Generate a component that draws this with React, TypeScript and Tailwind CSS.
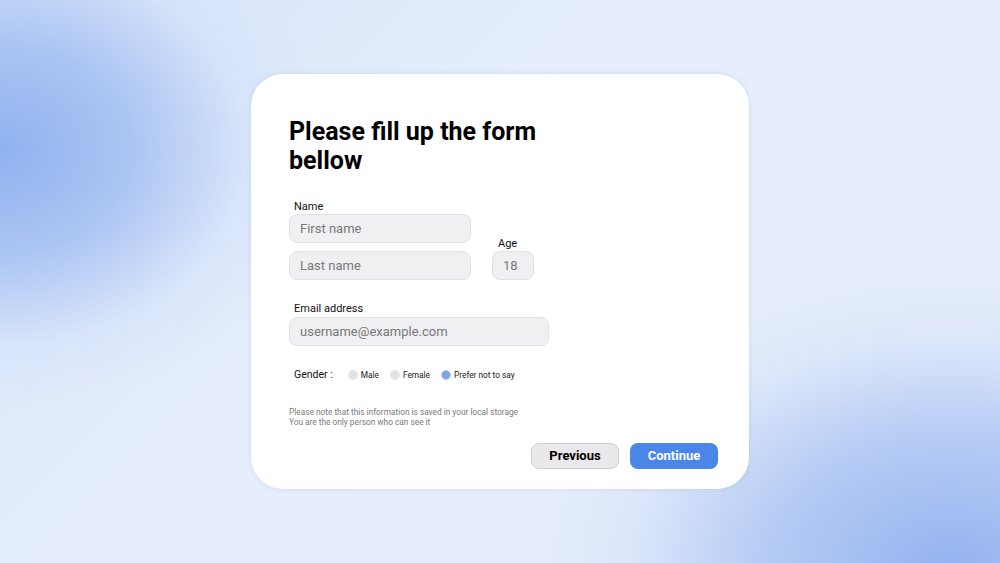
import { useState } from 'react';

const GENDERS = ['Male', 'Female', 'Prefer not to say'];

function Field({ placeholder, className }: { placeholder: string; className: string }) {
  return (
    <input
      placeholder={placeholder}
      className={`h-[29px] rounded-[8px] border border-[#e1e1e6] bg-[#f0f0f3] px-[10px] text-[13px] text-[#333] outline-none placeholder:text-[#787878] ${className}`}
    />
  );
}

export default function App() {
  const [gender, setGender] = useState('Prefer not to say');

  return (
    <div
      className="flex h-[563px] w-[1000px] items-center justify-center overflow-hidden bg-[#e7eefb] bg-[radial-gradient(ellipse_330px_260px_at_0px_150px,#8fb2ef_0%,rgba(150,182,240,0.7)_40%,rgba(200,218,248,0.35)_75%,transparent_100%),radial-gradient(ellipse_420px_300px_at_950px_570px,#93b2ef_0%,rgba(150,182,240,0.6)_45%,rgba(200,218,248,0.3)_78%,transparent_100%),linear-gradient(135deg,#d6e3f9_0%,#e6eefc_40%,#e6edfb_100%)]"
      style={{ fontFamily: 'Roboto, "Liberation Sans", sans-serif' }}
    >
      <div className="flex h-[415px] w-[498px] flex-col rounded-[32px] bg-white pl-[38px] pr-[31px] pt-[43px] shadow-[0_0_5px_rgba(60,80,120,0.12)]">
        <h1 className="text-[25px] font-bold leading-[29px] text-black">
          Please fill up the form
          <br />
          bellow
        </h1>

        <div className="mt-[25px] flex items-end gap-[21px]">
          <div className="flex w-[182px] flex-col">
            <label className="pl-[5px] text-[11px] leading-[13px] text-[#111]">Name</label>
            <Field placeholder="First name" className="mt-[1px] w-[182px]" />
            <Field placeholder="Last name" className="mt-[8px] w-[182px]" />
          </div>
          <div className="flex flex-col">
            <label className="pl-[6px] text-[11px] leading-[13px] text-[#111]">Age</label>
            <Field placeholder="18" className="mt-[1px] w-[42px]" />
          </div>
        </div>

        <div className="mt-[22px] flex flex-col">
          <label className="pl-[5px] text-[11px] leading-[13px] text-[#111]">Email address</label>
          <Field placeholder="username@example.com" className="mt-[2px] w-[260px]" />
        </div>

        <div className="mt-[22px] flex h-[14px] items-center pl-[5px]">
          <span className="mr-[15px] text-[10.5px] text-[#111]">Gender :</span>
          <div className="flex items-center gap-[11px]">
            {GENDERS.map((g) => (
              <label key={g} className="flex cursor-pointer items-center gap-[3px]" onClick={() => setGender(g)}>
                <span
                  className={
                    gender === g
                      ? 'h-[10px] w-[10px] rounded-full border-[1.5px] border-[#b8cdf3] bg-[#7ca4ea]'
                      : 'h-[10px] w-[10px] rounded-full border border-[#e6e6e9] bg-[#e2e2e5]'
                  }
                />
                <span className="text-[8.3px] text-[#222]">{g}</span>
              </label>
            ))}
          </div>
        </div>

        <div className="mt-[25px] text-[8.3px] leading-[10px] text-[#7a7a7a]">
          <p>Please note that this information is saved in your local storage</p>
          <p>You are the only person who can see it</p>
        </div>

        <div className="mt-[16px] flex justify-end gap-[11px]">
          <button className="h-[26px] w-[88px] rounded-[8px] border border-[#cfcfd4] bg-[#e9e9ec] text-[13px] font-bold text-black">
            Previous
          </button>
          <button className="h-[26px] w-[88px] rounded-[8px] bg-[#4a85e8] text-[13px] font-bold text-white">
            Continue
          </button>
        </div>
      </div>
    </div>
  );
}
